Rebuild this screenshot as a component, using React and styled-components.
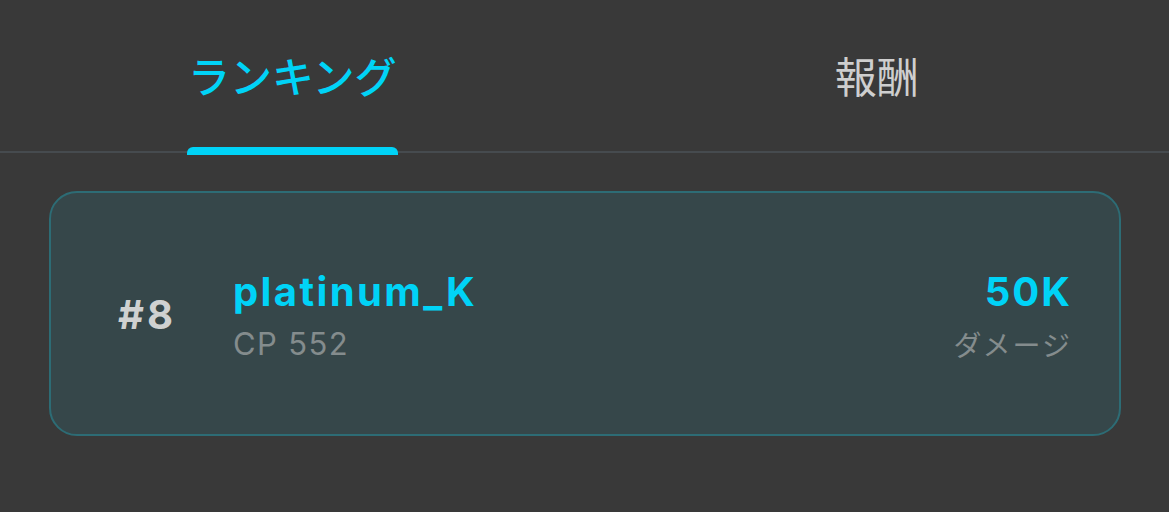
import React from "react";
import styled, { createGlobalStyle } from "styled-components";

const Global = createGlobalStyle`
  html, body { margin: 0; padding: 0; background: #393939; }
  body { font-family: Inter, "Noto Sans CJK JP", sans-serif; }
`;

const Page = styled.div`
  width: 1169px;
  height: 512px;
  background: #393939;
  overflow: hidden;
`;

const Tabs = styled.div`
  display: flex;
  height: 151px;
  border-bottom: 2px solid #464b4f;
`;

const Tab = styled.div`
  position: relative;
  flex: 1;
  display: flex;
  align-items: center;
  justify-content: center;
  height: 151px;
  box-sizing: border-box;
  padding-bottom: 0;
  font-family: "Noto Sans CJK JP", sans-serif;
  font-size: 42px;
  font-weight: ${(p) => (p.$active ? 500 : 400)};
  color: ${(p) => (p.$active ? "#00d3f7" : "#cfcfcf")};
`;

const TabLabel = styled.span`
  display: block;
  line-height: 1;
  padding-bottom: 2px;
`;

const Indicator = styled.div`
  position: absolute;
  bottom: -4px;
  left: 50%;
  width: 211px;
  margin-left: -105px;
  height: 8px;
  background: #00d3f7;
  border-radius: 6px 6px 0 0;
`;

const Card = styled.div`
  margin: 38px 48px 0 49px;
  height: 245px;
  box-sizing: border-box;
  border: 2px solid #2d6c75;
  border-radius: 28px;
  background: #36474a;
  display: flex;
  align-items: center;
  padding: 4px 49px 0 67px;
`;

const Rank = styled.div`
  width: 115px;
  flex: none;
  font-size: 40px;
  font-weight: 700;
  color: #cfd1d1;
  letter-spacing: 3px;
  margin-top: -2px;
`;

const Info = styled.div`
  flex: 1;
  display: flex;
  flex-direction: column;
  gap: 10px;
`;

const Name = styled.div`
  font-size: 40px;
  font-weight: 700;
  color: #00d3f7;
  line-height: 46px;
  letter-spacing: 2.4px;
`;

const Sub = styled.div`
  font-size: 31px;
  font-weight: 400;
  color: #848c8d;
  line-height: 38px;
  letter-spacing: 1.4px;
`;

const Score = styled.div`
  display: flex;
  flex-direction: column;
  align-items: flex-end;
  gap: 10px;
`;

const Value = styled.div`
  font-size: 40px;
  font-weight: 700;
  color: #00d3f7;
  line-height: 46px;
  letter-spacing: 2px;
  margin-right: -2px;
`;

const Label = styled.div`
  font-family: "Noto Sans CJK JP", sans-serif;
  font-size: 28px;
  color: #848c8d;
  line-height: 38px;
  letter-spacing: 2px;
  margin-right: -2px;
`;

export default function App() {
  return (
    <Page>
      <Global />
      <Tabs>
        <Tab $active>
          <TabLabel>ランキング</TabLabel>
          <Indicator />
        </Tab>
        <Tab>
          <TabLabel>報酬</TabLabel>
        </Tab>
      </Tabs>
      <Card>
        <Rank>#8</Rank>
        <Info>
          <Name>platinum_K</Name>
          <Sub>CP 552</Sub>
        </Info>
        <Score>
          <Value>50K</Value>
          <Label>ダメージ</Label>
        </Score>
      </Card>
    </Page>
  );
}
